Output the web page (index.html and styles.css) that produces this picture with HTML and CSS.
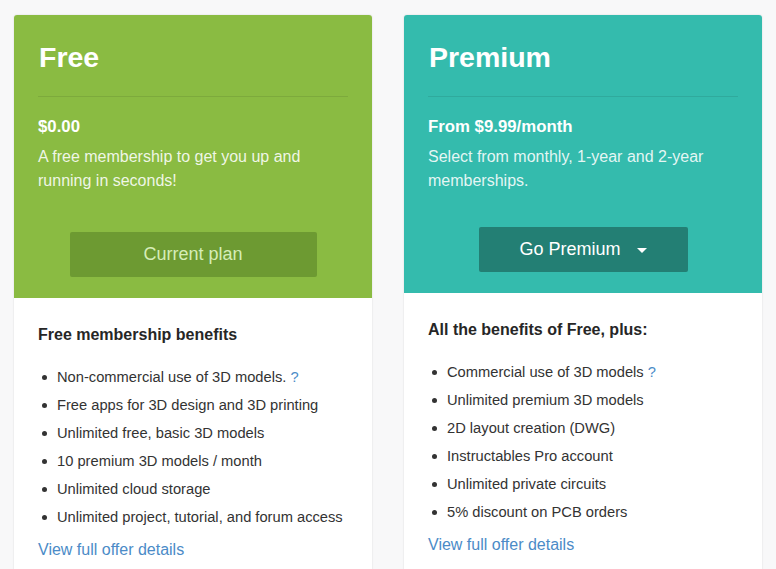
FILE: index.html
```html
<!DOCTYPE html>
<html>
<head>
<meta charset="utf-8">
<link rel="stylesheet" href="styles.css">
</head>
<body>
<div class="plans">
  <div class="card card-free">
    <div class="head">
      <h2 class="title">Free</h2>
      <div class="price">$0.00</div>
      <p class="desc">A free membership to get you up and running in seconds!</p>
      <div class="btn-row"><span class="btn btn-current">Current plan</span></div>
    </div>
    <div class="body">
      <h3 class="bhead">Free membership benefits</h3>
      <ul class="list">
        <li>Non-commercial use of 3D models. <a class="q" href="#">?</a></li>
        <li>Free apps for 3D design and 3D printing</li>
        <li>Unlimited free, basic 3D models</li>
        <li>10 premium 3D models / month</li>
        <li>Unlimited cloud storage</li>
        <li>Unlimited project, tutorial, and forum access</li>
      </ul>
      <a class="more" href="#">View full offer details</a>
    </div>
  </div>
  <div class="card card-premium">
    <div class="head">
      <h2 class="title">Premium</h2>
      <div class="price">From $9.99/month</div>
      <p class="desc">Select from monthly, 1-year and 2-year memberships.</p>
      <div class="btn-row"><span class="btn btn-go">Go Premium <span class="caret"></span></span></div>
    </div>
    <div class="body">
      <h3 class="bhead">All the benefits of Free, plus:</h3>
      <ul class="list">
        <li>Commercial use of 3D models <a class="q" href="#">?</a></li>
        <li>Unlimited premium 3D models</li>
        <li>2D layout creation (DWG)</li>
        <li>Instructables Pro account</li>
        <li>Unlimited private circuits</li>
        <li>5% discount on PCB orders</li>
      </ul>
      <a class="more" href="#">View full offer details</a>
    </div>
  </div>
</div>
</body>
</html>
```

FILE: styles.css
```css
* { box-sizing: border-box; }
html, body { margin: 0; padding: 0; }
body {
  background: #f8f8f9;
  font-family: "Liberation Sans", Arial, sans-serif;
  color: #333;
}
.plans {
  display: flex;
  align-items: flex-start;
  gap: 32px;
  padding: 15px 14px 0 14px;
}
.card {
  width: 358px;
  background: #fff;
  border-radius: 3px;
  overflow: hidden;
  box-shadow: 0 0 2px rgba(0,0,0,0.14);
}
.head {
  padding: 24px 24px 21px 24px;
  color: #fff;
}
.card-free .head { background: #8abb42; }
.card-premium .head { background: #34bbad; }
.title {
  margin: 0;
  font-size: 28.5px;
  line-height: 36px;
  font-weight: bold;
  padding-bottom: 21px;
  padding-left: 1px;
  border-bottom: 1px solid rgba(0,0,0,0.09);
}
.price {
  margin-top: 18px;
  font-size: 16.8px;
  line-height: 24px;
  font-weight: bold;
}
.desc {
  margin: 6px 0 0 0;
  font-size: 16px;
  line-height: 24px;
  color: rgba(255,255,255,0.88);
}
.btn-row {
  display: flex;
  justify-content: center;
  margin-top: 39px;
}
.card-premium .btn-row { margin-top: 34px; }
.btn {
  display: flex;
  align-items: center;
  justify-content: center;
  height: 45px;
  font-size: 18px;
  border-radius: 2px;
}
.btn-current {
  width: 247px;
  background: #6d9a32;
  color: #d6edb8;
}
.btn-go {
  width: 209px;
  background: #237f74;
  color: #fff;
  gap: 16px;
}
.caret {
  width: 0;
  height: 0;
  border-left: 5px solid transparent;
  border-right: 5px solid transparent;
  border-top: 5px solid #fff;
  margin-top: 1px;
}
.body {
  padding: 25px 24px 30px 24px;
}
.bhead {
  margin: 0;
  font-size: 16px;
  line-height: 24px;
  font-weight: bold;
  color: #262626;
}
.list {
  list-style: none;
  margin: 16px 0 0 0;
  padding: 0;
}
.list li {
  padding-left: 19px;
  font-size: 14.7px;
  line-height: 28px;
  white-space: nowrap;
  color: #333;
}
.list li::before {
  content: "";
  display: inline-block;
  width: 5px;
  height: 5px;
  border-radius: 50%;
  background: #333;
  margin-left: -15px;
  margin-right: 10px;
  vertical-align: middle;
  position: relative;
  top: -1px;
}
.q {
  color: #4b8bc7;
  text-decoration: none;
}
.more {
  display: block;
  margin-top: 7px;
  font-size: 16px;
  line-height: 24px;
  color: #4b8bc7;
  text-decoration: none;
}
```
